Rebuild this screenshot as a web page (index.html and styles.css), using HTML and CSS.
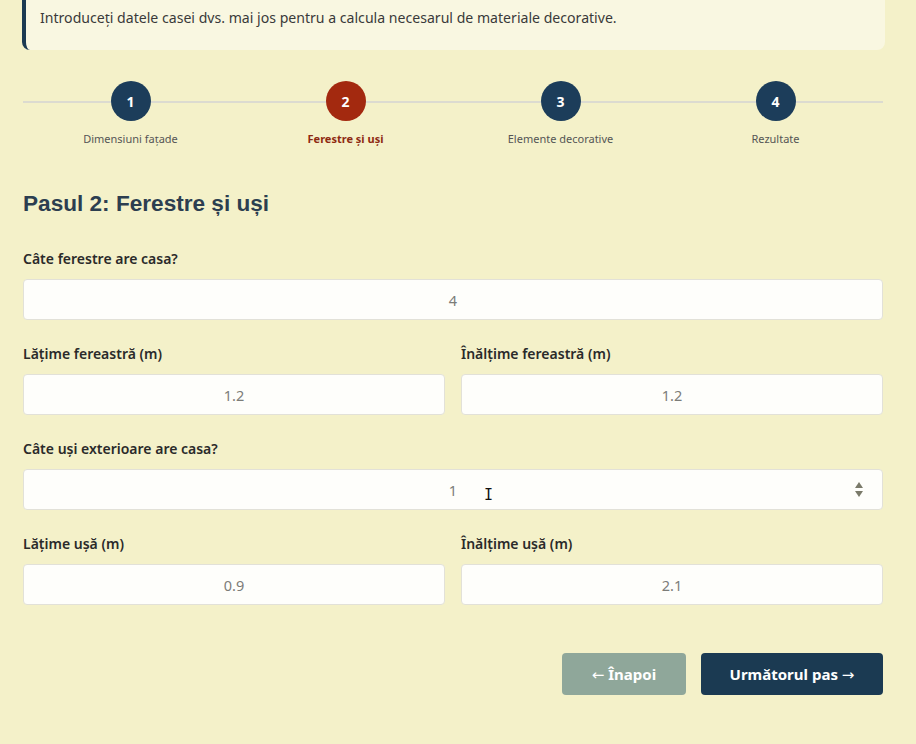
FILE: index.html
```html
<!DOCTYPE html>
<html lang="ro">
<head>
<meta charset="utf-8">
<title>Calculator</title>
<link rel="stylesheet" href="styles.css">
</head>
<body>
<div class="page">
  <div class="intro">Introduceți datele casei dvs. mai jos pentru a calcula necesarul de materiale decorative.</div>

  <div class="stepper">
    <div class="step">
      <div class="circle">1</div>
      <div class="step-label">Dimensiuni fațade</div>
    </div>
    <div class="step active">
      <div class="circle">2</div>
      <div class="step-label">Ferestre și uși</div>
    </div>
    <div class="step">
      <div class="circle">3</div>
      <div class="step-label">Elemente decorative</div>
    </div>
    <div class="step">
      <div class="circle">4</div>
      <div class="step-label">Rezultate</div>
    </div>
  </div>

  <h2 class="title">Pasul 2: Ferestre și uși</h2>

  <div class="field">
    <label class="label">Câte ferestre are casa?</label>
    <div class="input">4</div>
  </div>

  <div class="row">
    <div class="field">
      <label class="label">Lățime fereastră (m)</label>
      <div class="input">1.2</div>
    </div>
    <div class="field">
      <label class="label">Înălțime fereastră (m)</label>
      <div class="input">1.2</div>
    </div>
  </div>

  <div class="field">
    <label class="label">Câte uși exterioare are casa?</label>
    <div class="input has-spin">1<span class="cursor">I</span><span class="spin"><svg width="10" height="20" viewBox="0 0 10 20"><path d="M5 3 L9 9 H1 Z" fill="#7a7a6a"/><path d="M1 12 H9 L5 18 Z" fill="#7a7a6a"/></svg></span></div>
  </div>

  <div class="row">
    <div class="field">
      <label class="label">Lățime ușă (m)</label>
      <div class="input">0.9</div>
    </div>
    <div class="field">
      <label class="label">Înălțime ușă (m)</label>
      <div class="input">2.1</div>
    </div>
  </div>

  <div class="actions">
    <button class="btn btn-back"><span class="arrow">←</span> Înapoi</button>
    <button class="btn btn-next">Următorul pas <span class="arrow">→</span></button>
  </div>
</div>
</body>
</html>
```

FILE: styles.css
```css
* { box-sizing: border-box; }
html, body {
  margin: 0;
  padding: 0;
  background: #f4f1c9;
  font-family: "Noto Sans", "Open Sans", sans-serif;
  color: #2c3e50;
}
.page {
  padding: 0 33px 0 23px;
  width: 916px;
}
.intro {
  background: #f9f7e1;
  border-left: 4px solid #1c3a52;
  border-radius: 0 0 8px 8px;
  padding: 6px 16px 20px 14px;
  font-size: 14.1px;
  color: #3a3a3a;
  line-height: 24px;
  margin-left: -1px;
  margin-right: -2px;
}
.stepper {
  display: flex;
  justify-content: space-between;
  margin-top: 31px;
  position: relative;
  height: 66px;
}
.stepper::before {
  content: "";
  position: absolute;
  left: 0;
  right: 0;
  top: 20px;
  height: 2px;
  background: #dcdbd0;
}
.step {
  width: 215px;
  display: flex;
  flex-direction: column;
  align-items: center;
  position: relative;
}
.circle {
  width: 40px;
  height: 40px;
  border-radius: 50%;
  background: #1c3d5a;
  color: #fff;
  font-weight: 700;
  font-size: 14px;
  display: flex;
  align-items: center;
  justify-content: center;
}
.step.active .circle { background: #a3290f; }
.step-label {
  margin-top: 10px;
  font-size: 11px;
  color: #555;
}
.step.active .step-label {
  color: #8e2a12;
  font-weight: 700;
}
.title {
  font-family: "Liberation Sans", Arial, sans-serif;
  font-size: 22.6px;
  font-weight: 700;
  color: #2c3e50;
  margin: 42px 0 30px 0;
  line-height: 30px;
}
.field {
  display: flex;
  flex-direction: column;
  margin-bottom: 24px;
  flex: 1;
}
.label {
  font-size: 14px;
  font-weight: 600;
  color: #2a2a2a;
  line-height: 20px;
  margin-bottom: 10px;
}
.input {
  height: 41px;
  background: #fefefb;
  border: 1px solid #e2e1d8;
  border-radius: 4px;
  font-size: 14.5px;
  color: #7c7c78;
  display: flex;
  align-items: center;
  justify-content: center;
  position: relative;
}
.row {
  display: flex;
  gap: 16px;
}
.cursor {
  position: absolute;
  left: 460px;
  top: 18px;
  font-size: 15px;
  color: #111;
  font-family: "DejaVu Sans Mono", monospace;
  line-height: 1;
}
.spin {
  position: absolute;
  right: 18px;
  top: 9px;
  display: flex;
}
.actions {
  display: flex;
  justify-content: flex-end;
  gap: 15px;
  margin-top: 24px;
}
.btn {
  border: none;
  border-radius: 4px;
  height: 42px;
  font-family: "Noto Sans", "Open Sans", sans-serif;
  font-size: 15px;
  font-weight: 700;
  color: #fff;
  padding: 0 16px;
}
.arrow {
  font-family: "DejaVu Sans", sans-serif;
  font-weight: 400;
  font-size: 15px;
}
.btn-back { background: #8fa79a; width: 124px; }
.btn-next { background: #1b3a52; width: 182px; }
```
